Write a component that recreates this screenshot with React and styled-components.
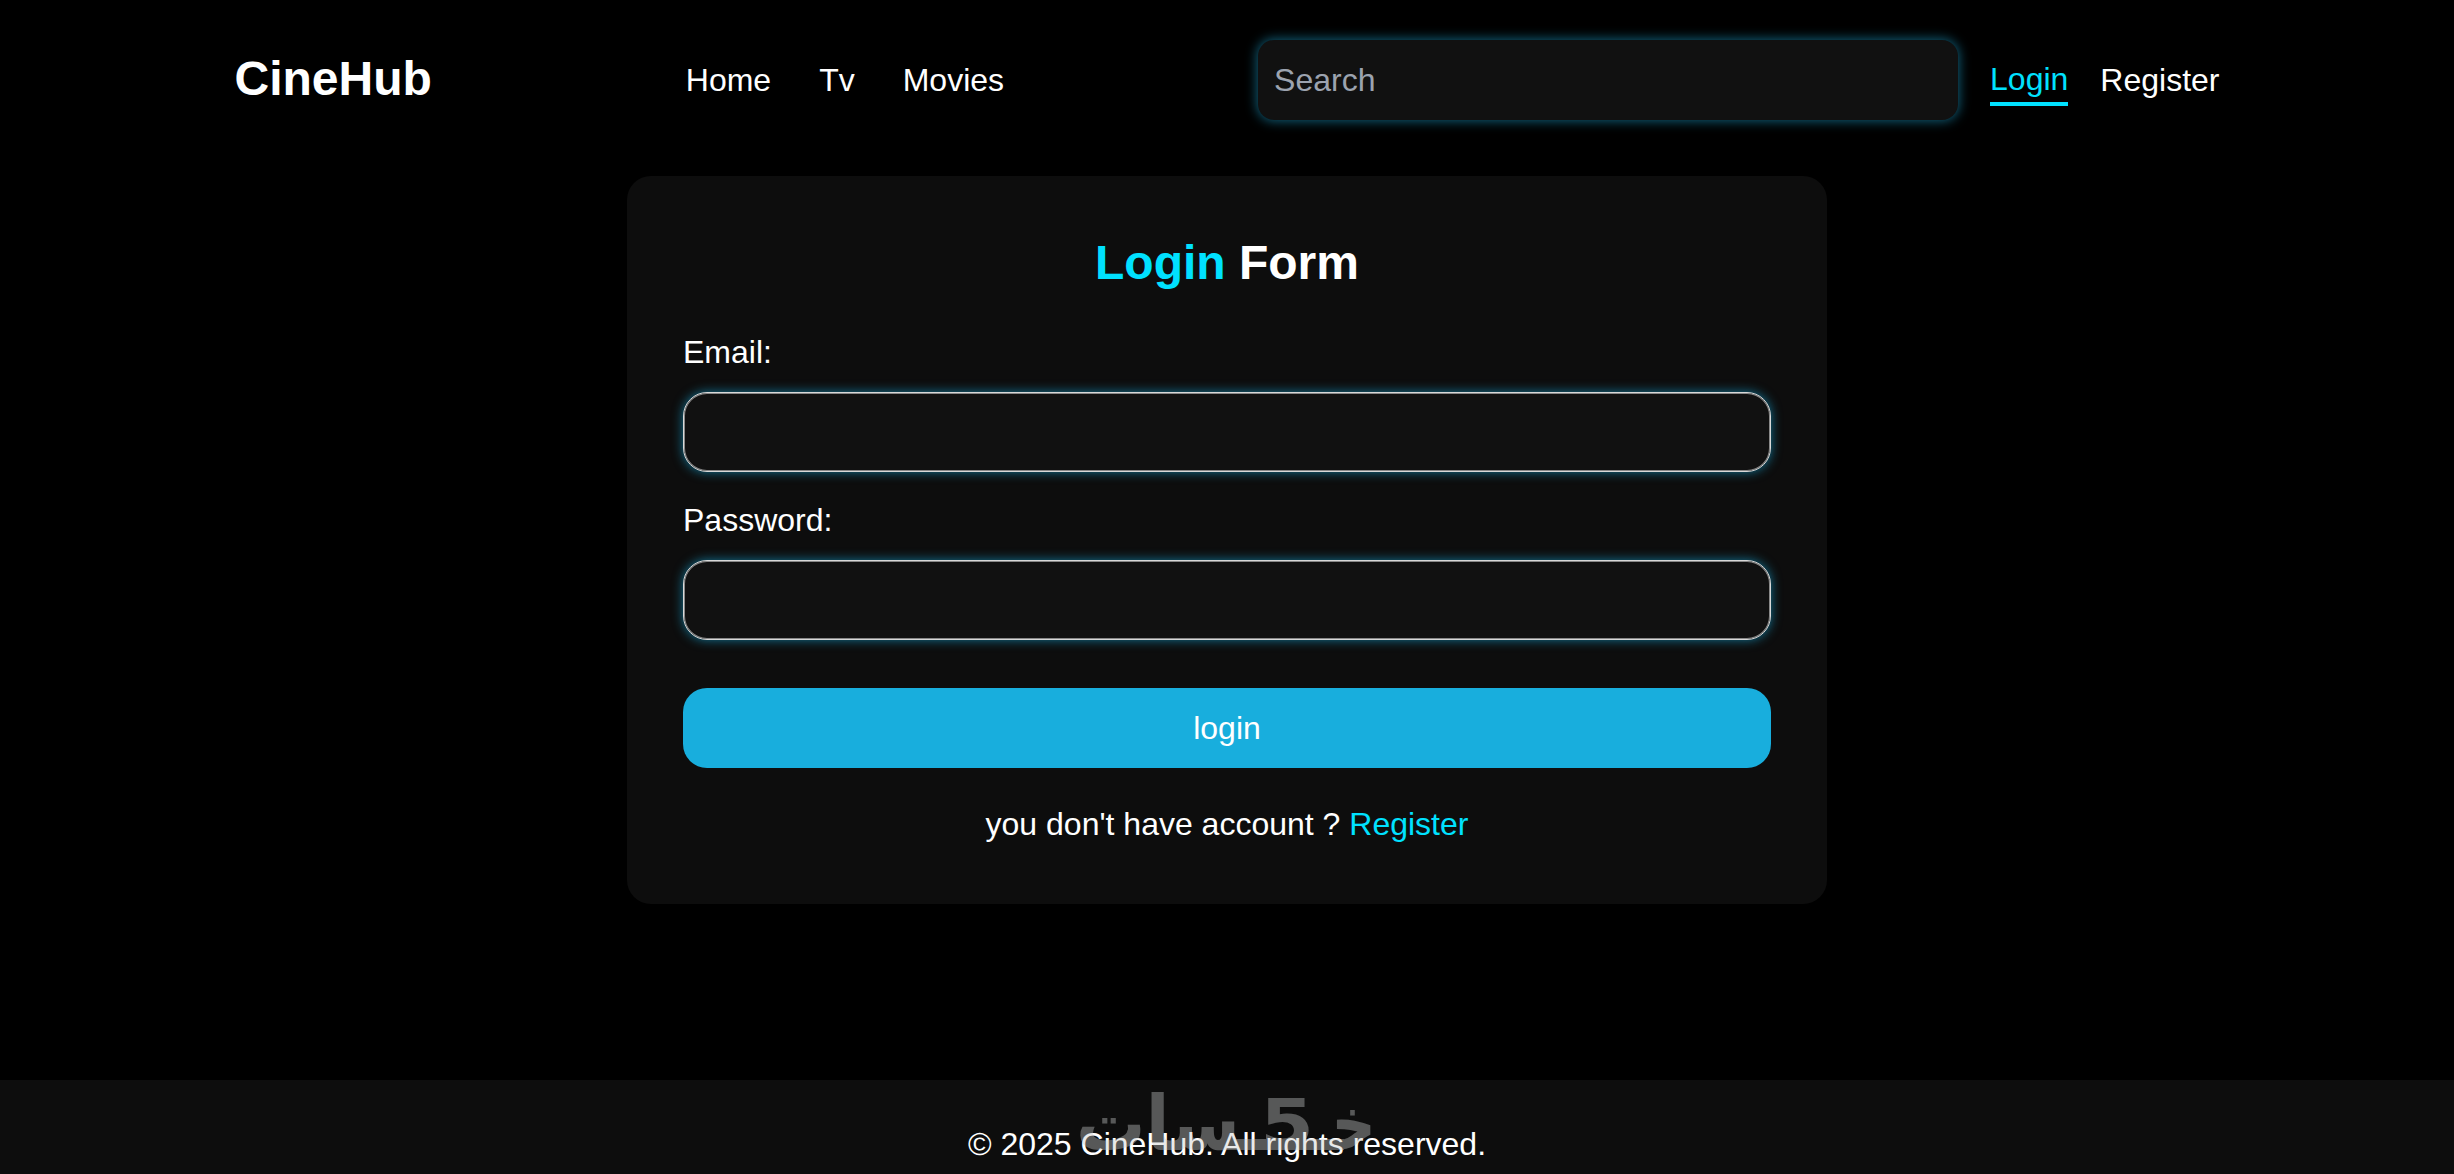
import React from 'react'
import styled, { createGlobalStyle } from 'styled-components'


const GlobalStyle = createGlobalStyle`
  * {
    box-sizing: border-box;
    margin: 0;
    padding: 0;
  }

  body {
    background-color: #000;
    color: #fff;
    font-family: Arial, 'Liberation Sans', sans-serif;
    font-size: 32px;
    line-height: 48px;
    overflow: hidden;
  }
`

const Page = styled.div`
  height: 100vh;
  display: flex;
  flex-direction: column;
`

const Header = styled.header`
  width: 1985px;
  height: 160px;
  margin: 0 auto;
  flex-shrink: 0;
  display: flex;
  align-items: center;
  justify-content: space-between;
`

const Logo = styled.h1`
  margin-bottom: 2px;
  font-size: 48px;
  line-height: 64px;
  font-weight: 700;
`

const Nav = styled.nav`
  display: flex;
  gap: 48px;
`

const NavLink = styled.a`
  margin-top: ${(props) => (props.$active ? '2px' : '0')};
  border-bottom: ${(props) => (props.$active ? '4px solid #00e1ff' : 'none')};
  color: ${(props) => (props.$active ? '#00e1ff' : '#fff')};
  line-height: ${(props) => (props.$active ? '46px' : '48px')};
  text-decoration: none;
  cursor: pointer;
`

const Actions = styled.div`
  display: flex;
  align-items: center;
  gap: 32px;
`

const Input = styled.input`
  width: 100%;
  height: 80px;
  padding: 0 16px;
  border: 1px solid #d8d8d8;
  border-radius: 24px;
  outline: none;
  background-color: #111;
  box-shadow: 0 0 11px #137596, inset 0 0 0 1px #888;
  color: #fff;
  font: inherit;

  &::placeholder {
    color: #9ca3af;
    opacity: 1;
  }
`

const Search = styled(Input)`
  width: 700px;
  border: none;
  border-radius: 16px;
  box-shadow: 0 0 12px 1px #11607a;
`

const Main = styled.main`
  flex: 1;
  padding-top: 16px;
`

const Form = styled.form`
  width: 1200px;
  height: 728px;
  margin: 0 auto;
  padding: 56px;
  display: flex;
  flex-direction: column;
  border-radius: 24px;
  background-color: #0d0d0d;
`

const Title = styled.h2`
  margin: -1px 0 33px;
  font-size: 48px;
  line-height: 64px;
  font-weight: 700;
  text-align: center;
`

const Accent = styled.span`
  color: #00e1ff;
`

const Field = styled.div`
  display: flex;
  flex-direction: column;
  gap: 16px;
  margin-bottom: 24px;
`

const Submit = styled.button`
  height: 80px;
  margin: 24px 0 32px;
  border: none;
  border-radius: 24px;
  background-color: #18aedd;
  color: #fff;
  font: inherit;
  cursor: pointer;
`

const Hint = styled.p`
  text-align: center;
`

const Footer = styled.footer`
  position: relative;
  height: 94px;
  padding-top: 40px;
  flex-shrink: 0;
  background-color: #0d0d0d;
  text-align: center;
`

const Watermark = styled.svg`
  position: absolute;
  top: 0;
  left: 1070px;
  overflow: visible;
  opacity: 0.4;
`

const App = () => {
  return (
    <Page>
      <GlobalStyle />
      <Header>
        <Logo>CineHub</Logo>
        <Nav>
          <NavLink>Home</NavLink>
          <NavLink>Tv</NavLink>
          <NavLink>Movies</NavLink>
        </Nav>
        <Actions>
          <Search placeholder="Search" />
          <NavLink $active>Login</NavLink>
          <NavLink>Register</NavLink>
        </Actions>
      </Header>

      <Main>
        <Form>
          <Title><Accent>Login</Accent> Form</Title>
          <Field>
            <label htmlFor="email">Email:</label>
            <Input id="email" type="email" />
          </Field>
          <Field>
            <label htmlFor="password">Password:</label>
            <Input id="password" type="password" />
          </Field>
          <Submit type="button">login</Submit>
          <Hint>you don't have account ? <Accent>Register</Accent></Hint>
        </Form>
      </Main>

      <Footer>
        <p>© 2025 CineHub. All rights reserved.</p>
        <Watermark width="310" height="94" fill="#c6c9c9" fontFamily="DejaVu Sans" fontWeight="700">
          <text x="6" y="70" fontSize="76" textLength="190" lengthAdjust="spacingAndGlyphs" direction="rtl" textAnchor="end">ـسات</text>
          <rect x="150" y="59" width="124" height="11" />
          <text x="190" y="66" fontSize="66" textLength="54" lengthAdjust="spacingAndGlyphs">5</text>
          <text x="240" y="70" fontSize="76" textLength="66" lengthAdjust="spacingAndGlyphs" direction="rtl" textAnchor="end">خـ</text>
        </Watermark>
      </Footer>
    </Page>
  )
}

export default App
